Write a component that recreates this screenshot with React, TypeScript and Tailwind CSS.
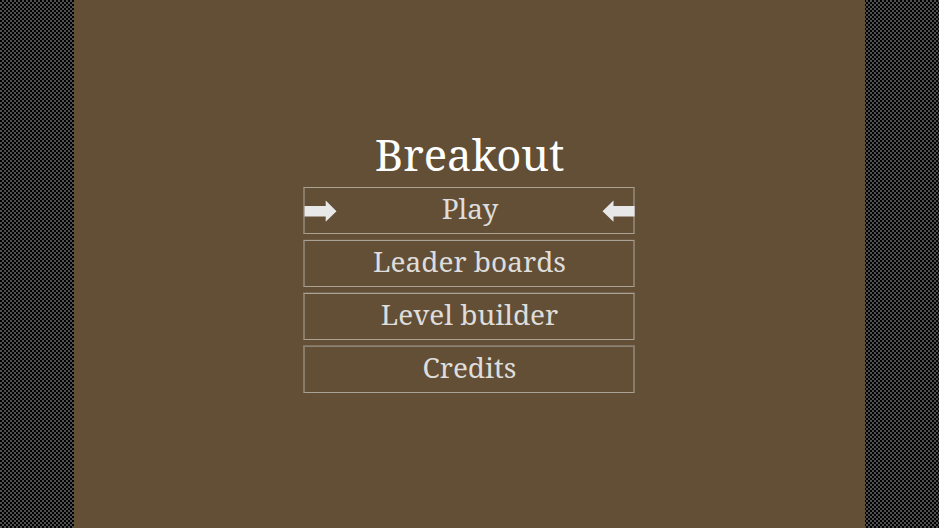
const items = [
  { label: "Play", edge: "" },
  { label: "Leader boards", edge: "shadow-[0_-1px_0_#6d5b45]" },
  { label: "Level builder", edge: "shadow-[0_-1px_0_#766651]" },
  { label: "Credits", edge: "border-t-[#8f8373] shadow-[0_-1px_0_#7f715f]" },
];

function Arrow({ flip = false }: { flip?: boolean }) {
  return (
    <svg viewBox="0 0 33 22" className={`h-[22px] w-[33px] shrink-0 ${flip ? "-mr-[2px]" : "-ml-px"}`} fill="#e8e8e8">
      {flip ? (
        <path d="M32.6 6H11.5V0.5L0.5 11.2L11.5 21.8V16.5H32.6Z" />
      ) : (
        <path d="M0.5 6H21.7V0.5L32.5 11.2L21.7 21.8V16.5H0.5Z" />
      )}
    </svg>
  );
}

export default function App() {
  return (
    <div className="flex h-[528px] w-[939px] justify-center overflow-hidden bg-[conic-gradient(#505050_25%,#000_0_50%,#505050_0_75%,#000_0)] bg-[size:4px_4px]">
      <main className="flex w-[791px] shrink-0 flex-col bg-[#624f36] pt-[124px] font-['Noto_Serif','DejaVu_Serif',serif]">
        <h1 className="h-[63px] text-center text-[43.6px] leading-[60px] whitespace-nowrap text-white">Breakout</h1>
        <nav className="ml-[229px] flex w-[332px] flex-col gap-[6px]">
          {items.map(({ label, edge }, i) => (
            <button
              key={label}
              className={`flex h-[47px] items-center justify-center border-x-2 border-y border-x-[#887b69] border-y-[#aba296] text-[28px] text-[#dfdddb] ${edge}`}
            >
              {i === 0 && <Arrow />}
              <span className="flex-1 pb-[5px] pl-px leading-[40px] whitespace-nowrap">{label}</span>
              {i === 0 && <Arrow flip />}
            </button>
          ))}
        </nav>
      </main>
    </div>
  );
}
